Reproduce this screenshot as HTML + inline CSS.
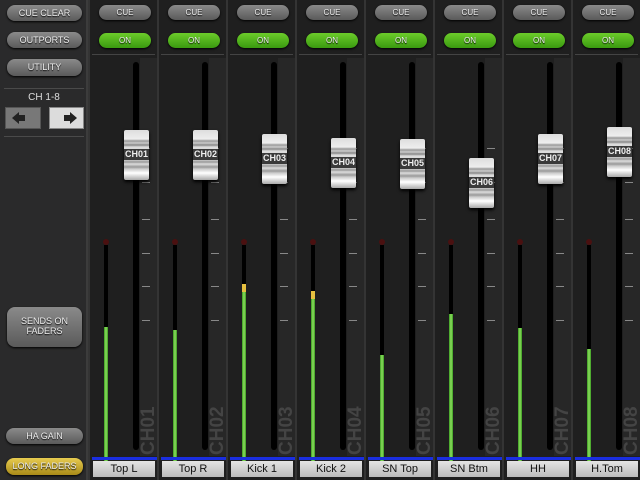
<!DOCTYPE html><html><head><meta charset="utf-8"><style>
*{margin:0;padding:0;box-sizing:border-box}
body{width:640px;height:480px;background:#1c1c1c;position:relative;overflow:hidden;font-family:"Liberation Sans",sans-serif}
.a{position:absolute}
.lp{left:0;top:0;width:88px;height:480px;background:#2a2a2b;border-right:2px solid #3c3c3c}
.btn{position:absolute;border-radius:8px;background:linear-gradient(#8a8a8a,#5a5a5a);color:#eee;font-size:9px;text-align:center;box-shadow:0 1px 2px #000;text-shadow:0 1px 1px #000}
.on{background:linear-gradient(#6ccc2a,#3a9a10)}
.gold{background:linear-gradient(#e8cc50,#a88a18)}
.st{position:absolute;top:0;width:69px;height:480px;background:#1f1f1f;border-left:2px solid #343434}
.sep{position:absolute;left:2px;right:2px;height:1px;background:#444}
.trk{position:absolute;left:43px;top:62px;width:6px;height:388px;background:#000;border-radius:3px}
.col{position:absolute;left:50px;top:58px;width:17px;height:398px;background:#272727}
.tk{position:absolute;left:52px;width:8px;height:1px;background:#888}
.cap{position:absolute;left:34px;width:25px;height:50px;border-radius:2px;background:linear-gradient(#ddd 0%,#eee 18%,#999 22%,#ccc 26%,#888 30%,#ddd 34%,#ccc 60%,#999 64%,#ddd 68%,#999 74%,#ccc 78%,#fff 86%,#aaa 100%);box-shadow:0 2px 3px #000}
.cap span{position:absolute;left:0;right:0;top:19px;height:11px;background:#3a3a3a;color:#eee;font-size:9px;font-weight:bold;line-height:11px;text-align:center}
.mt{position:absolute;left:14px;top:245px;width:4px;height:217px;background:#000}
.g{position:absolute;left:14px;width:4px;background:linear-gradient(90deg,#3a9a20,#8ee060,#3a9a20);bottom:18px}
.y{position:absolute;left:14px;width:4px;height:8px;background:#e6c040}
.dot{position:absolute;left:13px;top:239px;width:6px;height:6px;border-radius:3px;background:#4a1010}
.vl{position:absolute;left:49px;top:405px;width:20px;height:52px;writing-mode:vertical-rl;transform:rotate(180deg);color:#444;font-weight:bold;font-size:19px;line-height:20px;text-align:center}
.bl{position:absolute;left:2px;right:0;top:457px;height:3px;background:#1a2ee0}
.nm{position:absolute;left:3px;right:2px;top:461px;height:16px;background:linear-gradient(#e4e4e4,#bbb);color:#111;font-size:11px;line-height:16px;text-align:center}
</style></head><body>
<div class="a" style="left:88px;top:0;width:552px;height:2px;background:#555"></div>
<div class="a lp">
<div class="btn" style="left:7px;top:5px;width:75px;height:16px;line-height:16px">CUE CLEAR</div>
<div class="btn" style="left:7px;top:32px;width:75px;height:16px;line-height:16px">OUTPORTS</div>
<div class="btn" style="left:7px;top:59px;width:75px;height:17px;line-height:17px">UTILITY</div>
<div class="a" style="left:4px;top:88px;width:80px;height:1px;background:#4a4a4a"></div>
<div class="a" style="left:0;top:92px;width:88px;text-align:center;color:#ddd;font-size:10px">CH 1-8</div>
<div class="a" style="left:5px;top:107px;width:36px;height:22px;background:#787878;border:1px solid #555"><svg width="34" height="20"><polygon points="6,10 13,4 13,7 19,7 19,13 13,13 13,16" fill="#222"/></svg></div>
<div class="a" style="left:49px;top:107px;width:35px;height:22px;background:#dcdcdc;border:1px solid #888"><svg width="33" height="20"><polygon points="27,10 20,4 20,7 14,7 14,13 20,13 20,16" fill="#222"/></svg></div>
<div class="a" style="left:4px;top:136px;width:80px;height:1px;background:#4a4a4a"></div>
<div class="btn" style="left:7px;top:307px;width:75px;height:40px;padding-top:9px;line-height:10px">SENDS ON<br>FADERS</div>
<div class="btn" style="left:6px;top:428px;width:77px;height:16px;line-height:16px">HA GAIN</div>
<div class="btn gold" style="left:6px;top:458px;width:77px;height:17px;line-height:17px">LONG FADERS</div>
</div>

<div class="st" style="left:88px"><div class="btn" style="left:9px;top:5px;width:52px;height:15px;line-height:15px;font-size:8px">CUE</div><div class="btn on" style="left:9px;top:33px;width:52px;height:15px;line-height:15px;font-size:8px">ON</div><div class="sep" style="top:54px"></div><div class="col"></div><div class="trk"></div><div class="tk" style="top:148px"></div><div class="tk" style="top:182px"></div><div class="tk" style="top:219px"></div><div class="tk" style="top:253px"></div><div class="tk" style="top:286px"></div><div class="tk" style="top:320px"></div><div class="dot"></div><div class="mt"></div><div class="g" style="top:327px"></div><div class="cap" style="top:130px"><span>CH01</span></div><div class="vl">CH01</div><div class="bl"></div><div class="nm">Top L</div></div>

<div class="st" style="left:157px"><div class="btn" style="left:9px;top:5px;width:52px;height:15px;line-height:15px;font-size:8px">CUE</div><div class="btn on" style="left:9px;top:33px;width:52px;height:15px;line-height:15px;font-size:8px">ON</div><div class="sep" style="top:54px"></div><div class="col"></div><div class="trk"></div><div class="tk" style="top:148px"></div><div class="tk" style="top:182px"></div><div class="tk" style="top:219px"></div><div class="tk" style="top:253px"></div><div class="tk" style="top:286px"></div><div class="tk" style="top:320px"></div><div class="dot"></div><div class="mt"></div><div class="g" style="top:330px"></div><div class="cap" style="top:130px"><span>CH02</span></div><div class="vl">CH02</div><div class="bl"></div><div class="nm">Top R</div></div>

<div class="st" style="left:226px"><div class="btn" style="left:9px;top:5px;width:52px;height:15px;line-height:15px;font-size:8px">CUE</div><div class="btn on" style="left:9px;top:33px;width:52px;height:15px;line-height:15px;font-size:8px">ON</div><div class="sep" style="top:54px"></div><div class="col"></div><div class="trk"></div><div class="tk" style="top:148px"></div><div class="tk" style="top:182px"></div><div class="tk" style="top:219px"></div><div class="tk" style="top:253px"></div><div class="tk" style="top:286px"></div><div class="tk" style="top:320px"></div><div class="dot"></div><div class="mt"></div><div class="g" style="top:292px"></div><div class="y" style="top:284px"></div><div class="cap" style="top:134px"><span>CH03</span></div><div class="vl">CH03</div><div class="bl"></div><div class="nm">Kick 1</div></div>

<div class="st" style="left:295px"><div class="btn" style="left:9px;top:5px;width:52px;height:15px;line-height:15px;font-size:8px">CUE</div><div class="btn on" style="left:9px;top:33px;width:52px;height:15px;line-height:15px;font-size:8px">ON</div><div class="sep" style="top:54px"></div><div class="col"></div><div class="trk"></div><div class="tk" style="top:148px"></div><div class="tk" style="top:182px"></div><div class="tk" style="top:219px"></div><div class="tk" style="top:253px"></div><div class="tk" style="top:286px"></div><div class="tk" style="top:320px"></div><div class="dot"></div><div class="mt"></div><div class="g" style="top:299px"></div><div class="y" style="top:291px"></div><div class="cap" style="top:138px"><span>CH04</span></div><div class="vl">CH04</div><div class="bl"></div><div class="nm">Kick 2</div></div>

<div class="st" style="left:364px"><div class="btn" style="left:9px;top:5px;width:52px;height:15px;line-height:15px;font-size:8px">CUE</div><div class="btn on" style="left:9px;top:33px;width:52px;height:15px;line-height:15px;font-size:8px">ON</div><div class="sep" style="top:54px"></div><div class="col"></div><div class="trk"></div><div class="tk" style="top:148px"></div><div class="tk" style="top:182px"></div><div class="tk" style="top:219px"></div><div class="tk" style="top:253px"></div><div class="tk" style="top:286px"></div><div class="tk" style="top:320px"></div><div class="dot"></div><div class="mt"></div><div class="g" style="top:355px"></div><div class="cap" style="top:139px"><span>CH05</span></div><div class="vl">CH05</div><div class="bl"></div><div class="nm">SN Top</div></div>

<div class="st" style="left:433px"><div class="btn" style="left:9px;top:5px;width:52px;height:15px;line-height:15px;font-size:8px">CUE</div><div class="btn on" style="left:9px;top:33px;width:52px;height:15px;line-height:15px;font-size:8px">ON</div><div class="sep" style="top:54px"></div><div class="col"></div><div class="trk"></div><div class="tk" style="top:148px"></div><div class="tk" style="top:182px"></div><div class="tk" style="top:219px"></div><div class="tk" style="top:253px"></div><div class="tk" style="top:286px"></div><div class="tk" style="top:320px"></div><div class="dot"></div><div class="mt"></div><div class="g" style="top:314px"></div><div class="cap" style="top:158px"><span>CH06</span></div><div class="vl">CH06</div><div class="bl"></div><div class="nm">SN Btm</div></div>

<div class="st" style="left:502px"><div class="btn" style="left:9px;top:5px;width:52px;height:15px;line-height:15px;font-size:8px">CUE</div><div class="btn on" style="left:9px;top:33px;width:52px;height:15px;line-height:15px;font-size:8px">ON</div><div class="sep" style="top:54px"></div><div class="col"></div><div class="trk"></div><div class="tk" style="top:148px"></div><div class="tk" style="top:182px"></div><div class="tk" style="top:219px"></div><div class="tk" style="top:253px"></div><div class="tk" style="top:286px"></div><div class="tk" style="top:320px"></div><div class="dot"></div><div class="mt"></div><div class="g" style="top:328px"></div><div class="cap" style="top:134px"><span>CH07</span></div><div class="vl">CH07</div><div class="bl"></div><div class="nm">HH</div></div>

<div class="st" style="left:571px"><div class="btn" style="left:9px;top:5px;width:52px;height:15px;line-height:15px;font-size:8px">CUE</div><div class="btn on" style="left:9px;top:33px;width:52px;height:15px;line-height:15px;font-size:8px">ON</div><div class="sep" style="top:54px"></div><div class="col"></div><div class="trk"></div><div class="tk" style="top:148px"></div><div class="tk" style="top:182px"></div><div class="tk" style="top:219px"></div><div class="tk" style="top:253px"></div><div class="tk" style="top:286px"></div><div class="tk" style="top:320px"></div><div class="dot"></div><div class="mt"></div><div class="g" style="top:349px"></div><div class="cap" style="top:127px"><span>CH08</span></div><div class="vl">CH08</div><div class="bl"></div><div class="nm">H.Tom</div></div>
</body></html>
